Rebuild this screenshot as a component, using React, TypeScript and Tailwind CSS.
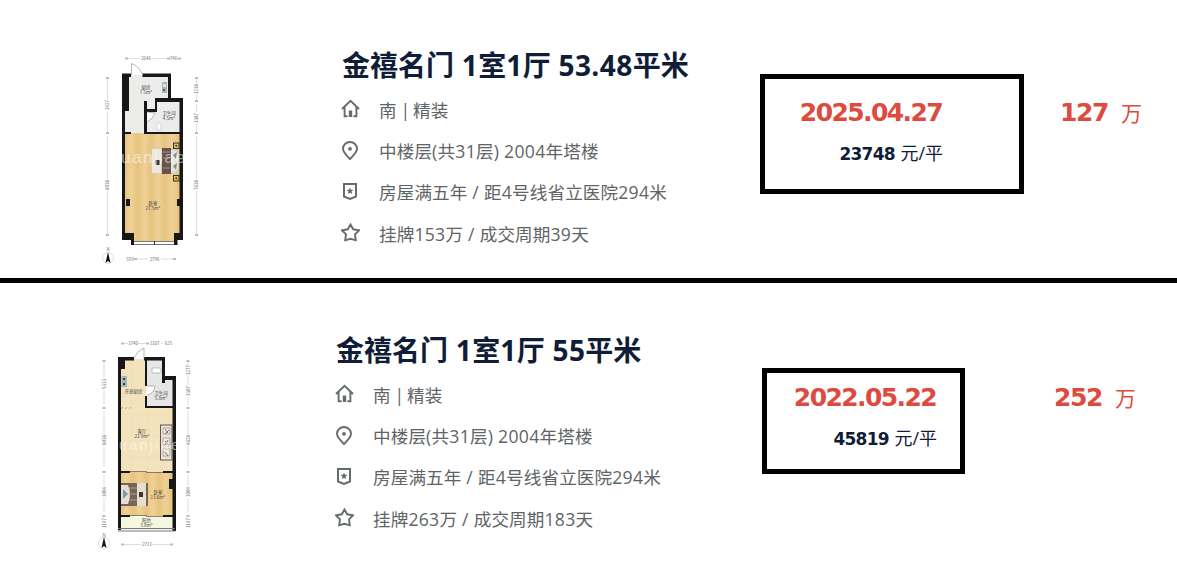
import { Fragment, type ReactNode } from "react";

type Listing = {
  title: string;
  lines: string[];
  date: string;
  unitPrice: string;
  total: string;
};

const listings: Listing[] = [
  {
    title: "金禧名门 1室1厅 53.48平米",
    lines: [
      "南 | 精装",
      "中楼层(共31层) 2004年塔楼",
      "房屋满五年 / 距4号线省立医院294米",
      "挂牌153万 / 成交周期39天",
    ],
    date: "2025.04.27",
    unitPrice: "23748",
    total: "127",
  },
  {
    title: "金禧名门 1室1厅 55平米",
    lines: [
      "南 | 精装",
      "中楼层(共31层) 2004年塔楼",
      "房屋满五年 / 距4号线省立医院294米",
      "挂牌263万 / 成交周期183天",
    ],
    date: "2022.05.22",
    unitPrice: "45819",
    total: "252",
  },
];

function Mixed({ text, latin }: { text: string; latin: string }) {
  return (
    <>
      {text.split(/([\x20-\x7e]+)/).map((part, i) =>
        i % 2 ? (
          <span key={i} className={latin}>
            {part}
          </span>
        ) : (
          <Fragment key={i}>{part}</Fragment>
        )
      )}
    </>
  );
}

const icons: ReactNode[] = [
  <>
    <path d="M1 10 9.500 1.800 18 10M3.600 8v9.200h3M15.400 8v9.200h-3" />
    <path d="M9.500 11.500v6.500" strokeWidth="3.400" />
  </>,
  <>
    <path d="M9 18C5.500 14 2 11.300 2 7.700a7 6.700 0 0 1 14 0C16 11.300 12.500 14 9 18Z" />
    <circle cx="9" cy="7.800" r="1.900" fill="#666b6d" stroke="none" />
  </>,
  <>
    <path d="M3 2h12v12.500L9 17l-6-2.500Z" strokeWidth="2" />
    <path
      d="m9 5.400 1 2.300 2.500.2-1.900 1.600.6 2.500L9 10.700 6.800 12l.6-2.500-1.900-1.600 2.500-.2Z"
      fill="#666b6d"
      stroke="none"
    />
  </>,
  <path d="m9.500 1.500 2.700 4.800 5.800 1-4 4.100.8 5.900-5.300-1.500-5.300 1.500.8-5.900-4-4.100 5.800-1Z" />,
];

function Plan1() {
  return (
    <svg
      width="110"
      height="220"
      viewBox="100 50 110 220"
      fontFamily="Noto Sans CJK SC, sans-serif"
      textAnchor="middle"
    >
      <defs>
        <linearGradient id="wood" x2=".12" spreadMethod="reflect">
          <stop stopColor="#e6c47e" />
          <stop offset="1" stopColor="#efd196" />
        </linearGradient>
      </defs>
      <path d="M124 75h45v25h12v33h-57z" fill="#ececeb" />
      <path d="M124 133h57v104h-6v6h-41v-6h-10z" fill="url(#wood)" />
      <path
        d="M122 73.500h9V77h-2v34h-4v122h9v12h-3v-5h-9zM142.500 73.500H171V98h12v142h-5.500v5H174v-12h5.500V102H157v10h-10v10h-3V101h3v8h8V98h13V77h-25.500zM125 132h6v2h-6zM144 122h3v10h33v2h-36zM126 199h4v7h-4zM177 199h4v7h-4z"
        fill="#171717"
      />
      <path d="M134 242.500h40" stroke="#fff" strokeWidth="3" />
      <path d="M134 241.500h40M134 244.500h40" stroke="#777" />
      <path d="M154 241h1v4h-1z" fill="#333" />
      <path d="M131.500 75V63.500q7 2 11 11M147 112l8 1q-2 6-8 9" fill="#fff" stroke="#888" strokeWidth=".6" />
      <rect x="162" y="82" width="5" height="11" fill="#a8b6bc" />
      <rect x="163" y="84" width="3" height="3" fill="#dce5e8" />
      <rect x="163" y="89" width="2" height="2" fill="#4d6670" />
      <path d="M157 130v-6q2-2 4 0v6z" fill="#fff" stroke="#aaa" strokeWidth=".4" />
      <g>
        <rect x="151" y="148" width="28" height="26" fill="#d8cbb5" />
        <path d="M152 149h9v24h-9z" fill="#eee8dd" />
        <path d="M162 148h9v26h-9z" fill="#66554c" />
        <path d="M163 152h7M163 158h7M163 168h7" stroke="#a39281" />
        <path d="M171 150q7 0 7 4v15q-4 5-7 3z" fill="#e9e4da" />
        <path d="m173 155 4-3-1 7zm0 11 4-3-1 7z" fill="#6f91a5" />
        <rect x="155.500" y="160" width="4" height="5" fill="#333c3a" />
      </g>
      <g fill="#d8bf59" stroke="#333" strokeWidth="1">
        <rect x="173.500" y="143" width="5.500" height="5.500" />
        <rect x="173.500" y="175.500" width="5.500" height="5.500" />
      </g>
      <path d="M175.500 145h1.500v1.500h-1.500zM175.500 177.500h1.500v1.500h-1.500z" fill="#222" />
      <text x="153" y="163" fontSize="17" fill="#fff" opacity=".5" fontFamily="Liberation Sans, sans-serif" textLength="64">
        uanjiae
      </text>
      <g fontSize="4.500" fill="#444">
        <text x="146" y="89">厨房</text>
        <text x="146" y="94">7.5m²</text>
        <text x="169" y="115">卫生间</text>
        <text x="169" y="120">4.5m²</text>
        <text x="153" y="205">卧室</text>
        <text x="153" y="210">27.5m²</text>
      </g>
      <g stroke="#bbb" strokeWidth=".5">
        <path d="M126 58.500h14M152 58.500h18M177 58.500h3M107.500 77v23M107.500 112v20M107.500 136v43M107.500 191v44M196.500 77v7M196.500 94v7M196.500 104v8M196.500 124v8M196.500 136v43M196.500 191v44M136 259h12M161 259h13" />
        <path
          d="M125 58.500h3M167 58.500h3M178 58.500h3M106 78h3M106 133h3M106 235h3M195 78h3M195 101h3M195 133h3M195 235h3M134 259h3M173 259h3"
          strokeWidth="1.800"
        />
      </g>
      <g fontSize="4.400" fill="#666">
        <text x="146" y="60">2646</text>
        <text x="173.500" y="60">746</text>
        <text x="130" y="260.500">593</text>
        <text x="154.500" y="260.500">2796</text>
        <text transform="translate(109 105) rotate(-90)">3427</text>
        <text transform="translate(109 185) rotate(-90)">6038</text>
        <text transform="translate(198 89) rotate(-90)">1238</text>
        <text transform="translate(198 118) rotate(-90)">1387</text>
        <text transform="translate(198 185) rotate(-90)">7638</text>
        <text x="108" y="250.500">N</text>
      </g>
      <circle cx="108" cy="258" r="5.500" fill="none" stroke="#ddd" />
      <path d="m108 252 2.500 11-2.500-2-2.500 2z" fill="#111" />
    </svg>
  );
}

function Plan2() {
  return (
    <svg
      width="110"
      height="220"
      viewBox="95 335 110 220"
      fontFamily="Noto Sans CJK SC, sans-serif"
      textAnchor="middle"
    >
      <path d="M120 359h26v48h28v65h-54z" fill="#f3e3bc" />
      <path d="M123 376h20M123 394h20M123 414h48M123 436h37M123 458h46M132 362v108M148 409v61" stroke="#efdbb0" strokeWidth=".7" />
      <path d="M147 360h17v18h10v29h-27z" fill="#e6e6e6" />
      <path d="M120 472h54v44h-54z" fill="url(#wood)" />
      <path d="M120 517h54v13h-54z" fill="#f5f6e0" />
      <path
        d="M118 357h16v3.500h-9V369h-4v161h-3zM144 357h21v19h11v155h-3.500V489H169v-10h3.500v-71H145v-12h2v10h25.500v-26H165v3h-3v-22.500h-15V386h-2v-25.500h-1zM121 471h9v2h-9zM163 471h10v2h-10zM121 515h9v2h-9zM163 515h10v2h-10z"
        fill="#171717"
      />
      <path d="M130 471.500h17M146 472.500h17M130 515.500h17M146 516.500h17" stroke="#6d6658" strokeWidth=".8" />
      <path d="M118 528.500h57M118 531h57" stroke="#777" />
      <path d="M134 358q4-8 10-10v11M147 386h8q-1 8-8 9" fill="#fff" stroke="#888" strokeWidth=".6" />
      <rect x="152" y="368" width="9" height="5" rx="1" fill="#fff" stroke="#999" strokeWidth=".6" />
      <rect x="121.500" y="376" width="5.500" height="11" fill="#a3b5bc" />
      <path d="M123 378h2v2h-2zM123 383h2v2h-2z" fill="#34444b" />
      <g>
        <rect x="160.500" y="425" width="11.500" height="35" fill="#ece3da" stroke="#63564b" />
        <path d="M163 428h7v6h-7zM163 438h7v7h-7zM163 449h7v7h-7z" fill="#eee9e2" stroke="#8d7f74" strokeWidth=".6" />
        <path d="m165 429 3 4m-3 1 4-4m-4 11 3 3m0-4-3 5m0 7 3 4" stroke="#5e5550" strokeWidth=".8" />
      </g>
      <g>
        <rect x="121" y="483" width="27" height="23" fill="#776457" />
        <path d="M121 485h7q4 9 0 19h-7z" fill="#e5dfd2" />
        <path d="m123 489 5 5-5 5z" fill="#7d9ca8" />
        <path d="M129 488h8M129 494h8M129 500h8" stroke="#b19c85" />
        <path d="M137 483h9v23h-9z" fill="#e8dece" />
        <rect x="139" y="492" width="4" height="5" fill="#303b38" />
      </g>
      <path d="m121 409 2-2m2 2 2-2m2 2 2-2" stroke="#a59c89" strokeWidth=".8" />
      <text x="149" y="450" fontSize="14" fill="#fff" opacity=".5" fontFamily="Liberation Sans, sans-serif" textLength="60">
        uanjiae
      </text>
      <g fontSize="4.500" fill="#444">
        <text x="133.500" y="393">开放厨房</text>
        <text x="161" y="395">卫生间</text>
        <text x="161" y="400">5.8m²</text>
        <text x="142" y="432.500">客厅</text>
        <text x="142" y="437.500">22.9m²</text>
        <text x="158" y="494">卧室</text>
        <text x="158" y="499">13.6m²</text>
        <text x="146.500" y="522">阳台</text>
        <text x="146.500" y="527">3.8m²</text>
      </g>
      <g stroke="#bbb" strokeWidth=".5">
        <path d="M121 343.500h7M138 343.500h10M161 343.500h2M104 360v18M104 390v14M104 411v24M104 446v21M104 475v11M104 498v14M188 360v5M188 375v10M188 397v8M188 411v24M188 446v21M188 475v11M188 498v14M121 544.500h21M152 544.500h20" />
        <path
          d="M121 343.500h3M146 343.500h3M102.500 361h3M102.500 408h3M102.500 472h3M102.500 516h3M186.500 361h3M186.500 408h3M186.500 472h3M186.500 516h3M121 544.500h3M170 544.500h3"
          strokeWidth="1.800"
        />
      </g>
      <g fontSize="4.400" fill="#666">
        <text x="133" y="345">1740</text>
        <text x="154.500" y="345">1107</text>
        <text x="168.500" y="345">625</text>
        <text x="147" y="546">2711</text>
        <text transform="translate(105.500 384) rotate(-90)">5333</text>
        <text transform="translate(105.500 440) rotate(-90)">8038</text>
        <text transform="translate(105.500 492) rotate(-90)">3004</text>
        <text transform="translate(105.500 523) rotate(-90)">1147</text>
        <text transform="translate(189.500 370) rotate(-90)">1277</text>
        <text transform="translate(189.500 391) rotate(-90)">3307</text>
        <text transform="translate(189.500 440) rotate(-90)">4628</text>
        <text transform="translate(189.500 492) rotate(-90)">3004</text>
        <text transform="translate(189.500 523) rotate(-90)">1147</text>
        <text x="104" y="536.500">N</text>
      </g>
      <circle cx="104" cy="543" r="5.500" fill="none" stroke="#ddd" />
      <path d="m104 537 2.500 11-2.500-2-2.500 2z" fill="#111" />
    </svg>
  );
}

function Info({ item }: { item: Listing }) {
  return (
    <div className="w-[420px] shrink-0 whitespace-nowrap">
      <h2 className="ml-px h-10 text-[28px] leading-10 font-bold text-[#101d37]">
        <Mixed text={item.title} latin="tracking-[0.45px]" />
      </h2>
      <ul className="mt-1 text-[17.600px] tracking-[0.1px] text-[#606466]">
        {item.lines.map((line, i) => (
          <li key={line} className="flex h-[41.400px] items-center">
            <svg width="19" height="19" fill="none" stroke="#666b6d" strokeWidth="1.900" className="mb-0.5 shrink-0">
              {icons[i]}
            </svg>
            <span className="ml-[19px]">
              <Mixed text={line} latin={i === 0 ? "tracking-[-0.8px]" : "tracking-[0.3px]"} />
            </span>
          </li>
        ))}
      </ul>
    </div>
  );
}

function Deal({ item }: { item: Listing }) {
  return (
    <div className="flex flex-col items-end whitespace-nowrap">
      <p className="mr-px font-['DejaVu_Sans'] text-[25px] leading-9 font-bold tracking-[-1.600px] text-[#dd4b40]">
        {item.date}
      </p>
      <p className="mt-1 text-lg leading-9 text-[#101d37]">
        <b className="mr-px font-['DejaVu_Sans'] text-[17px] tracking-[-0.800px]">
          {item.unitPrice}
        </b>{" "}
        元/平
      </p>
    </div>
  );
}

function Total({ value }: { value: string }) {
  return (
    <p className="flex items-baseline gap-[13px] leading-9 text-[#dd4b40]">
      <b className="font-['DejaVu_Sans'] text-[25px] tracking-[-1.400px]">{value}</b>
      <span className="text-[21px]">万</span>
    </p>
  );
}

export default function App() {
  const [first, second] = listings;
  return (
    <main className="h-[569px] w-[1177px] overflow-hidden bg-white font-['Open_Sans','Noto_Sans_CJK_SC',sans-serif]">
      <section className="flex h-[278px] items-start pl-[100px]">
        <div className="mt-[50px] mr-[131px] shrink-0">
          <Plan1 />
        </div>
        <div className="mt-[45px]">
          <Info item={first} />
        </div>
        <div className="mt-[74px] -ml-px flex h-[120px] w-[264px] shrink-0 justify-end border-[5px] border-black pt-4 pr-[76px]">
          <Deal item={first} />
        </div>
        <div className="mt-[95px] ml-9">
          <Total value={first.total} />
        </div>
      </section>
      <div className="h-[5px] bg-black" />
      <section className="flex h-[286px] items-start pl-[95px]">
        <div className="mt-[52px] mr-[130px] shrink-0">
          <Plan2 />
        </div>
        <div className="mt-[47px]">
          <Info item={second} />
        </div>
        <div className="mt-[85px] ml-[7px] flex h-[106px] w-[203px] shrink-0 justify-end border-[5px] border-black pt-[7px] pr-[23px]">
          <Deal item={second} />
        </div>
        <div className="mt-[97px] ml-[89px]">
          <Total value={second.total} />
        </div>
      </section>
    </main>
  );
}
